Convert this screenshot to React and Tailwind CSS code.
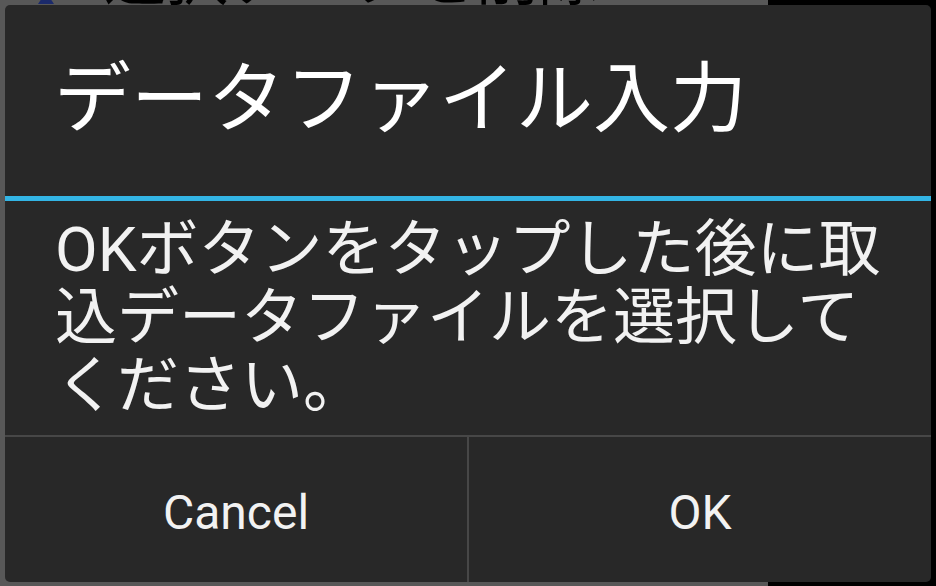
import React from "react";

const App = () => {
  return (
    <div
      className="relative w-[936px] h-[586px] overflow-hidden flex"
      style={{ fontFamily: 'Roboto, "Noto Sans CJK JP", sans-serif' }}
    >
      {/* Background screen behind the dialog */}
      <div className="w-[768px] h-full bg-[#585858] relative">
        <div className="absolute left-[38px] -top-[8px] w-0 h-0 border-l-[8px] border-r-[8px] border-b-[12px] border-l-transparent border-r-transparent border-b-[#1b2a6b]" />
        <div className="absolute left-[104px] -top-[52px] text-[62px] leading-none text-black whitespace-nowrap">
          選択データを削除
        </div>
      </div>
      <div className="flex-1 h-full bg-black" />

      {/* Dialog */}
      <div className="absolute left-[5px] top-[5px] w-[926px] h-[577px] bg-[#282828] rounded-[5px] flex flex-col text-white">
        {/* Title */}
        <div className="h-[191px] flex items-center pl-[49px]">
          <h1 className="text-[77px] leading-none text-white">
            データファイル入力
          </h1>
        </div>
        <div className="h-[5px] bg-[#33b5e5]" />

        {/* Message */}
        <div className="flex-1 pl-[50px] pr-[40px] pt-[15px]">
          <p className="text-[62px] leading-[68px] text-[#f2f2f2]">
            OKボタンをタップした後に取込データファイルを選択してください。
          </p>
        </div>

        {/* Buttons */}
        <div className="h-[147px] border-t-2 border-[#474747] flex">
          <button className="flex-1 flex items-center justify-center pt-[6px] text-[48px] text-[#f2f2f2] border-r-2 border-[#474747]">
            Cancel
          </button>
          <button className="flex-1 flex items-center justify-center pt-[6px] text-[48px] text-[#f2f2f2]">
            OK
          </button>
        </div>
      </div>
    </div>
  );
};

export default App;
